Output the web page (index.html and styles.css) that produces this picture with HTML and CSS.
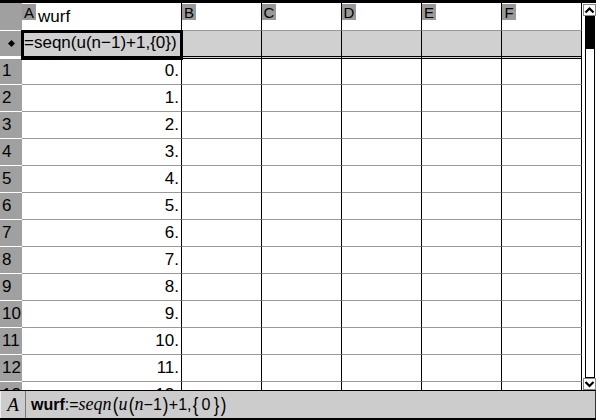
FILE: index.html
```html
<!DOCTYPE html>
<html>
<head>
<meta charset="utf-8">
<link rel="stylesheet" href="styles.css">
</head>
<body>
<div class="app">
  <div class="main">
    <div class="sheet">
      <div class="row head">
        <div class="rh"></div>
        <div class="cell a"><span class="lbl">A</span><span class="name">wurf</span></div>
        <div class="cell"><span class="lbl">B</span></div>
        <div class="cell"><span class="lbl">C</span></div>
        <div class="cell"><span class="lbl">D</span></div>
        <div class="cell"><span class="lbl">E</span></div>
        <div class="cell"><span class="lbl">F</span></div>
      </div>
      <div class="row frm">
        <div class="rh"><span class="dia"></span></div>
        <div class="cell a sel">=seqn(u(n−1)+1,{0})</div>
        <div class="cell"></div><div class="cell"></div><div class="cell"></div><div class="cell"></div><div class="cell"></div>
      </div>
      <div class="row data first"><div class="rh">1</div><div class="cell a">0.</div><div class="cell"></div><div class="cell"></div><div class="cell"></div><div class="cell"></div><div class="cell"></div></div>
      <div class="row data"><div class="rh">2</div><div class="cell a">1.</div><div class="cell"></div><div class="cell"></div><div class="cell"></div><div class="cell"></div><div class="cell"></div></div>
      <div class="row data"><div class="rh">3</div><div class="cell a">2.</div><div class="cell"></div><div class="cell"></div><div class="cell"></div><div class="cell"></div><div class="cell"></div></div>
      <div class="row data"><div class="rh">4</div><div class="cell a">3.</div><div class="cell"></div><div class="cell"></div><div class="cell"></div><div class="cell"></div><div class="cell"></div></div>
      <div class="row data"><div class="rh">5</div><div class="cell a">4.</div><div class="cell"></div><div class="cell"></div><div class="cell"></div><div class="cell"></div><div class="cell"></div></div>
      <div class="row data"><div class="rh">6</div><div class="cell a">5.</div><div class="cell"></div><div class="cell"></div><div class="cell"></div><div class="cell"></div><div class="cell"></div></div>
      <div class="row data"><div class="rh">7</div><div class="cell a">6.</div><div class="cell"></div><div class="cell"></div><div class="cell"></div><div class="cell"></div><div class="cell"></div></div>
      <div class="row data"><div class="rh">8</div><div class="cell a">7.</div><div class="cell"></div><div class="cell"></div><div class="cell"></div><div class="cell"></div><div class="cell"></div></div>
      <div class="row data"><div class="rh">9</div><div class="cell a">8.</div><div class="cell"></div><div class="cell"></div><div class="cell"></div><div class="cell"></div><div class="cell"></div></div>
      <div class="row data"><div class="rh">10</div><div class="cell a">9.</div><div class="cell"></div><div class="cell"></div><div class="cell"></div><div class="cell"></div><div class="cell"></div></div>
      <div class="row data"><div class="rh">11</div><div class="cell a">10.</div><div class="cell"></div><div class="cell"></div><div class="cell"></div><div class="cell"></div><div class="cell"></div></div>
      <div class="row data"><div class="rh">12</div><div class="cell a">11.</div><div class="cell"></div><div class="cell"></div><div class="cell"></div><div class="cell"></div><div class="cell"></div></div>
      <div class="row data"><div class="rh">13</div><div class="cell a">12.</div><div class="cell"></div><div class="cell"></div><div class="cell"></div><div class="cell"></div><div class="cell"></div></div>
    </div>
    <div class="scroll">
      <div class="arrow"><svg width="11" height="10" viewBox="0 0 11 10"><polyline points="1.5,7.5 5.5,3.5 9.5,7.5" fill="none" stroke="#000" stroke-width="2.2"/></svg></div>
      <div class="track"><div class="thumb"></div></div>
      <div class="arrow"><svg width="11" height="10" viewBox="0 0 11 10"><polyline points="1.5,3 5.5,7 9.5,3" fill="none" stroke="#000" stroke-width="2.2"/></svg></div>
    </div>
  </div>
  <div class="fbar">
    <div class="fb-label">A</div>
    <div class="fb-text"><b>wurf</b>:=<i>seqn</i><span class="p">(</span><i>u</i><span class="p">(</span><i>n</i>−1<span class="p">)</span>+1,<span class="p">{</span><span class="z">0</span><span class="p">}</span><span class="p">)</span></div>
  </div>
</div>
</body>
</html>
```
FILE: styles.css
```css
html, body {
  margin: 0;
  padding: 0;
}
body {
  width: 596px;
  height: 420px;
  overflow: hidden;
  background: #fff;
  font-family: "Liberation Sans", Arial, sans-serif;
  color: #000;
}
.app {
  width: 596px;
  height: 420px;
  box-sizing: border-box;
  border-top: 3px solid #000;
  border-bottom: 2px solid #000;
  display: flex;
  flex-direction: column;
}
.main {
  height: 387px;
  display: flex;
  overflow: hidden;
  flex: none;
}
.sheet {
  width: 582px;
  flex: none;
  overflow: hidden;
}
.row {
  display: flex;
  box-sizing: border-box;
}
.rh {
  width: 22px;
  flex: none;
  box-sizing: border-box;
  background: #a0a0a0;
  border-bottom: 1px solid #fff;
  font-size: 17px;
  padding-left: 2px;
}
.cell {
  width: 80px;
  flex: none;
  box-sizing: border-box;
  border-right: 1px solid #000;
  border-bottom: 1px solid #999;
  font-size: 17px;
}
.cell.a {
  width: 160px;
}
.head {
  height: 28px;
}
.head .cell {
  display: flex;
  align-items: flex-start;
}
.lbl {
  display: block;
  width: 14px;
  height: 16px;
  margin-top: 1px;
  background: #999;
  font-size: 15px;
  line-height: 17px;
  text-align: center;
}
.name {
  display: block;
  margin-left: 2px;
  margin-top: 4px;
  line-height: 20px;
}
.frm {
  height: 28px;
}
.frm .cell {
  background: #d0d0d0;
  border-bottom: 3px double #000;
}
.frm .rh {
  border-bottom: 3px solid #fff;
  display: flex;
  align-items: center;
  justify-content: center;
  padding: 0;
}
.dia {
  display: block;
  width: 5px;
  height: 5px;
  background: #000;
  transform: rotate(45deg);
  margin-top: -1px;
}
.sel {
  outline: 3px solid #000;
  outline-offset: -2px;
  position: relative;
  z-index: 1;
  line-height: 24px;
  padding-left: 2px;
}
.data {
  height: 27px;
  line-height: 26px;
}
.data.first {
  height: 26px;
  line-height: 24px;
}
.data .cell.a {
  text-align: right;
  padding-right: 2px;
}
.scroll {
  width: 14px;
  flex: none;
  display: flex;
  flex-direction: column;
  background: #fff;
}
.arrow {
  height: 12px;
  margin-left: 1px;
  width: 13px;
  box-sizing: border-box;
  border: 1px solid #888;
  flex: none;
  display: flex;
  align-items: center;
  justify-content: center;
}
.arrow:first-child {
  margin-top: 1px;
}
.track {
  flex: 1;
  margin-left: 3px;
  width: 10px;
  box-sizing: border-box;
  border: 1px solid #000;
}
.thumb {
  height: 32px;
  background: #000;
}
.fbar {
  flex: 1;
  box-sizing: border-box;
  border-top: 1px solid #000;
  border-right: 1px solid #333;
  background: #cccccc;
  display: flex;
  align-items: stretch;
}
.fb-label {
  width: 26px;
  box-sizing: border-box;
  border-left: 1px solid #eee;
  border-right: 1px solid #777;
  font-family: "Liberation Serif", "Times New Roman", serif;
  font-style: italic;
  font-size: 19px;
  display: flex;
  align-items: center;
  justify-content: center;
}
.fb-text {
  padding-left: 5px;
  font-size: 16px;
  display: flex;
  align-items: center;
  white-space: pre;
}
.fb-text b {
  font-weight: bold;
}
.fb-text i {
  font-family: "Liberation Serif", "Times New Roman", serif;
  font-style: italic;
  font-size: 18px;
}
.fb-text .p {
  font-size: 21px;
  transform: scaleX(0.8);
  display: inline-block;
}
.fb-text .z {
  padding: 0 3px;
}
```
